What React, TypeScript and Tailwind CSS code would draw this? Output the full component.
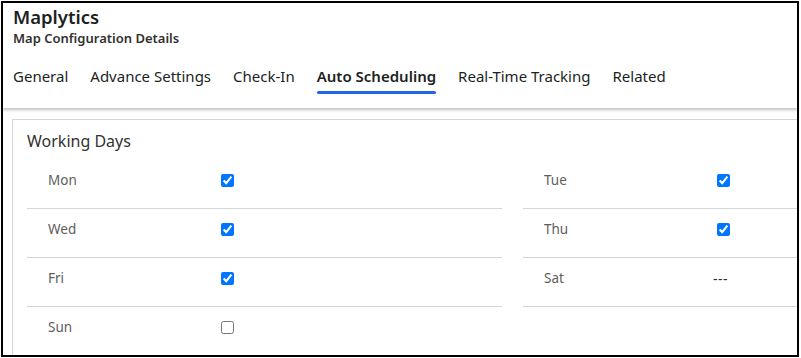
import React from "react";

const tabs = ["General", "Advance Settings", "Check-In", "Auto Scheduling", "Real-Time Tracking", "Related"];

type Day = { label: string; value: "on" | "off" | "none" };
const left: Day[] = [
  { label: "Mon", value: "on" },
  { label: "Wed", value: "on" },
  { label: "Fri", value: "on" },
  { label: "Sun", value: "off" },
];
const right: Day[] = [
  { label: "Tue", value: "on" },
  { label: "Thu", value: "on" },
  { label: "Sat", value: "none" },
];

function Row({ d }: { d: Day }) {
  return (
    <div className="h-[49px] border-b border-[#d6d6d6] flex items-start pt-[10px]">
      <div className="w-[194px] pl-[21px] text-[13.5px] leading-[20px] text-[#605e5c]">{d.label}</div>
      <div className="h-[20px] flex items-center">
        {d.value === "none" ? (
          <span className="text-[14px] leading-[20px] text-[#323130] -ml-[4px] tracking-[0.5px] pt-[2px]">---</span>
        ) : (
          <input type="checkbox" readOnly checked={d.value === "on"} className="w-[13px] h-[13px]" />
        )}
      </div>
    </div>
  );
}

export default function App() {
  return (
    <div className="w-[801px] h-[358px] bg-white overflow-hidden font-['Noto_Sans',sans-serif]">
      <div className="ml-px mt-px w-[798px] h-[356px] border-2 border-black overflow-hidden">
        <div className="relative z-10 h-[105px] bg-white shadow-[0_2px_3px_rgba(0,0,0,0.25)] pl-[10px]">
          <div className="pt-px text-[18.5px] leading-[26px] font-semibold text-[#201f1e]">Maplytics</div>
          <div className="text-[13px] leading-[16px] font-semibold text-[#323130]">Map Configuration Details</div>
          <div className="flex gap-[22px] mt-[18px]">
            {tabs.map((t) => (
              <div key={t} className="flex flex-col">
                <span
                  className={
                    "text-[15px] leading-[24px] text-[#201f1e] " + (t === "Auto Scheduling" ? "font-semibold" : "")
                  }
                >
                  {t}
                </span>
                <div className={"h-[3px] mt-[3px] rounded-sm " + (t === "Auto Scheduling" ? "bg-[#2266e3]" : "")} />
              </div>
            ))}
          </div>
        </div>
        <div className="ml-[9px] mt-[11px] w-[1000px] h-[300px] border-t border-l border-[#d6d6d6] bg-white pl-[14px]">
          <div className="pt-[9px] text-[16px] leading-[24px] text-[#323130]">Working Days</div>
          <div className="mt-[7px] flex gap-[21px]">
            <div className="w-[475px]">
              {left.map((d) => (
                <Row key={d.label} d={d} />
              ))}
            </div>
            <div className="w-[475px]">
              {right.map((d) => (
                <Row key={d.label} d={d} />
              ))}
            </div>
          </div>
        </div>
      </div>
    </div>
  );
}
